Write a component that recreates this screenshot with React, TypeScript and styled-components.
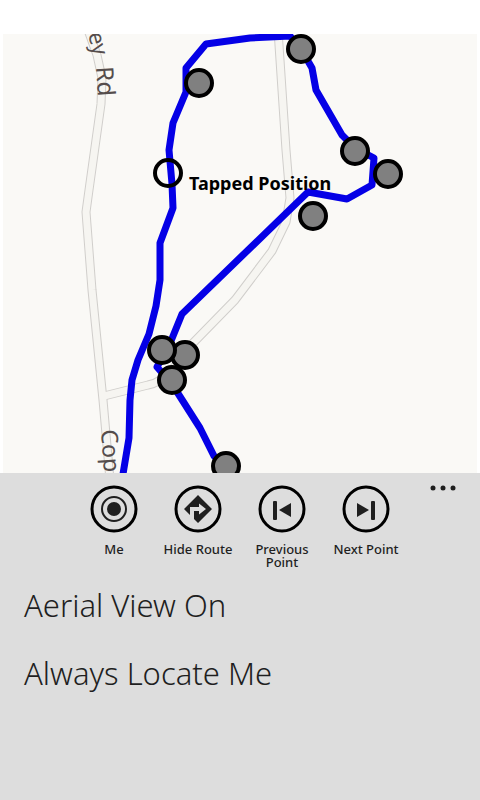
import React from 'react';
import styled, { createGlobalStyle } from 'styled-components';

const GlobalStyle = createGlobalStyle`
  * { box-sizing: border-box; }
  body { margin: 0; background: #fff; font-family: "Noto Sans", "Open Sans", sans-serif; color: #1f1f1f; }
`;

const PlainButton = styled.button`
  margin: 0;
  padding: 0;
  border: 0;
  background: none;
  font-family: inherit;
  color: inherit;
  cursor: pointer;
`;

const Page = styled.div`
  display: flex;
  flex-direction: column;
  min-height: 100vh;
  padding-top: 34px;
`;

const MapArea = styled.main`
  padding: 0 3px;
`;

const MapDrawing = styled.svg`
  display: block;
  width: 100%;
  height: auto;
  background: #faf9f6;
`;

const AppBar = styled.footer`
  flex: 1;
  background: #ddd;
`;

const Toolbar = styled.div`
  display: grid;
  grid-template-columns: 1fr auto 1fr;
  align-items: start;
  padding-top: 12px;
`;

const Actions = styled.div`
  grid-column: 2;
  display: flex;
  align-items: flex-start;
`;

const Action = styled(PlainButton)`
  display: flex;
  flex-direction: column;
  align-items: center;
  gap: 10px;
  width: 84px;
  font-size: 13px;
  font-weight: 500;
  line-height: 13px;
`;

const ActionIcon = styled.svg`
  display: block;
  width: 48px;
  height: 48px;
`;

const ActionLabel = styled.span`
  padding: 0 4px;
`;

const MoreButton = styled(PlainButton)`
  justify-self: end;
  width: 28px;
  height: 6px;
  margin-right: 23px;
`;

const MoreDots = styled.svg`
  display: block;
  width: 28px;
  height: 6px;
`;

const Menu = styled.nav`
  display: flex;
  flex-direction: column;
  align-items: flex-start;
  gap: 28px;
  padding: 16px 24px;
`;

const MenuItem = styled(PlainButton)`
  font-size: 31px;
  font-weight: 300;
  line-height: 40px;
`;

const roads = [
  'M88 30 L97 55 L102 78 L101 104 L89 190 L86 212 L92 290 L103 400 L110 480',
  'M278 30 L286 150 L290 198 L286 222 L272 251 L235 300 L193 343 L172 370 Q160 383 148 385 L104 396',
];

const route =
  'M122 480 L129 438 L130 400 L132 380 L138 360 L149 334 L156 306 L160 280 L160 243 L173 208 L172 184 L169 150 L173 123 L186 92 L186 68 L206 44 L250 38 L290 36 L301 49 L312 68 L316 90 L342 135 L355 148 L374 158 L372 185 L347 199 L308 192 L182 314 L171 341 L157 367 L172 384 L200 428 L214 456 L226 466';

const pins = [
  [301, 49], [199, 83], [355, 151], [388, 174], [313, 216],
  [185, 355], [162, 350], [172, 380], [226, 466],
];

const RouteMap = () => (
  <MapDrawing viewBox="3 34 474 439" role="img" aria-label="Route map">
    <g fill="none" strokeLinejoin="round">
      {roads.map((d) => <path key={d} d={d} stroke="#d0cecb" strokeWidth="9" />)}
      {roads.map((d) => <path key={d} d={d} stroke="#f6f5f1" strokeWidth="7" />)}
    </g>
    <g fill="#554d4c" fontSize="23" fontFamily='"Noto Sans", sans-serif'>
      <text transform="translate(88 34) rotate(76)" fontSize="22">ey</text>
      <text transform="translate(96 67) rotate(86)" fontSize="24">Rd</text>
      <text transform="translate(101 430) rotate(86)">Cop</text>
    </g>
    <path d={route} fill="none" stroke="#0500e6" strokeWidth="7" strokeLinejoin="round" />
    <g fill="#808080" stroke="#000" strokeWidth="4">
      {pins.map(([x, y]) => <circle key={`${x}-${y}`} cx={x} cy={y} r="13" />)}
      <circle cx="168" cy="173" r="13" fill="none" />
    </g>
    <text x="189" y="190" fontSize="18" fontWeight="700" fontFamily='"Noto Sans", sans-serif'>Tapped Position</text>
  </MapDrawing>
);

const actions = [
  {
    label: 'Me',
    icon: (
      <>
        <circle cx="24" cy="24" r="12" fill="none" stroke="#1f1f1f" strokeWidth="2" />
        <circle cx="24" cy="24" r="7" />
      </>
    ),
  },
  {
    label: 'Hide Route',
    icon: <path d="M24 10 L38 24 L24 38 L20 34 V26 H25 V29.500 L32 24 L25 18.500 V22 H16 V30 L10 24 Z" />,
  },
  {
    label: 'Previous Point',
    icon: <><rect x="15" y="16" width="4" height="19" rx="1" /><path d="M33 18 V32 L21 25 Z" /></>,
  },
  {
    label: 'Next Point',
    icon: <><rect x="29" y="16" width="4" height="19" rx="1" /><path d="M15 18 V32 L27 25 Z" /></>,
  },
];

export default function App() {
  return (
    <>
      <GlobalStyle />
      <Page>
        <MapArea><RouteMap /></MapArea>
        <AppBar>
          <Toolbar>
            <Actions>
              {actions.map(({ label, icon }) => (
                <Action key={label} type="button">
                  <ActionIcon viewBox="0 0 48 48" fill="#1f1f1f" aria-hidden="true">
                    <circle cx="24" cy="24" r="22" fill="none" stroke="#000" strokeWidth="3" />
                    {icon}
                  </ActionIcon>
                  <ActionLabel>{label}</ActionLabel>
                </Action>
              ))}
            </Actions>
            <MoreButton type="button" aria-label="More">
              <MoreDots viewBox="0 0 28 6" fill="#1f1f1f">
                <circle cx="4" cy="3" r="2.500" />
                <circle cx="14" cy="3" r="2.500" />
                <circle cx="24" cy="3" r="2.500" />
              </MoreDots>
            </MoreButton>
          </Toolbar>
          <Menu>
            <MenuItem type="button">Aerial View On</MenuItem>
            <MenuItem type="button">Always Locate Me</MenuItem>
          </Menu>
        </AppBar>
      </Page>
    </>
  );
}
